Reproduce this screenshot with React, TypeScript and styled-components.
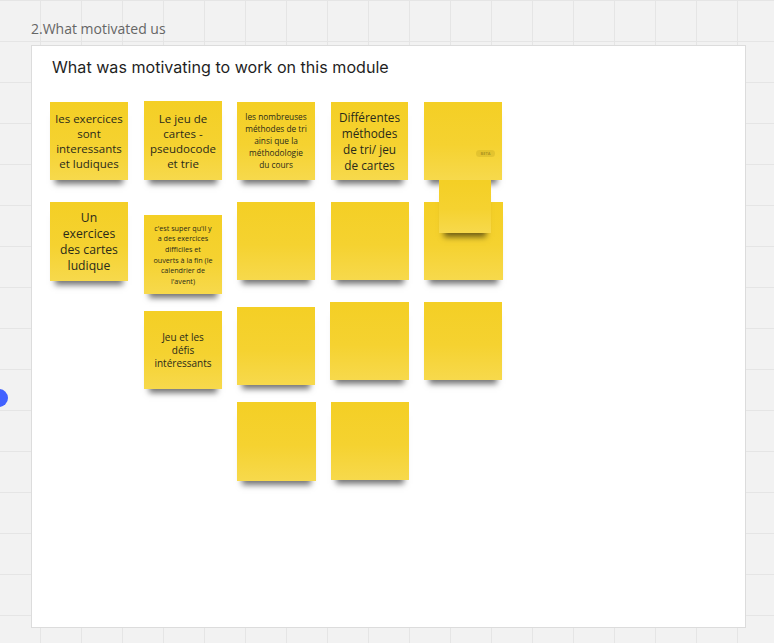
import React from "react"
import styled, { createGlobalStyle } from "styled-components"

const GlobalStyle = createGlobalStyle`
  html, body {
    margin: 0;
    padding: 0;
    background: #f2f2f2;
  }
  body {
    font-family: "Open Sans", "Liberation Sans", sans-serif;
  }
`

interface NoteData {
  left: number
  top: number
  w?: number
  h?: number
  text?: string[]
  size?: number
  line?: number
  tag?: boolean
}

// sticky notes sit on the frame's free canvas, so their place is the content
const notes: NoteData[] = [
  {
    left: 18,
    top: 56,
    text: ["les exercices", "sont", "interessants", "et ludiques"],
    size: 11.5,
    line: 15,
  },
  {
    left: 112,
    top: 55,
    h: 79,
    text: ["Le jeu de", "cartes -", "pseudocode", "et trie"],
    size: 11.5,
    line: 15,
  },
  {
    left: 205,
    top: 56,
    text: [
      "les nombreuses",
      "méthodes de tri",
      "ainsi que la",
      "méthodologie",
      "du cours",
    ],
    size: 8.3,
    line: 12,
  },
  {
    left: 299,
    top: 56,
    w: 77,
    text: ["Différentes", "méthodes", "de tri/ jeu", "de cartes"],
    size: 11.8,
    line: 16,
  },
  { left: 392, top: 56, tag: true },
  {
    left: 18,
    top: 156,
    h: 79,
    text: ["Un", "exercices", "des cartes", "ludique"],
    size: 12.2,
    line: 16,
  },
  {
    left: 112,
    top: 169,
    h: 79,
    text: [
      "c'est super qu'il y",
      "a des exercices",
      "difficiles et",
      "ouverts à la fin (le",
      "calendrier de",
      "l'avent)",
    ],
    size: 7.2,
    line: 10.6,
  },
  { left: 205, top: 156 },
  { left: 299, top: 156 },
  { left: 392, top: 156, w: 79 },
  {
    left: 112,
    top: 265,
    text: ["Jeu et les", "défis", "intéressants"],
    size: 10,
    line: 13,
  },
  { left: 205, top: 261 },
  { left: 298, top: 256, w: 79 },
  { left: 392, top: 256 },
  { left: 205, top: 356, w: 79, h: 79 },
  { left: 299, top: 356 },
  // small note stacked over the last column
  { left: 407, top: 134, w: 52, h: 53 },
]

export default function App() {
  return (
    <>
      <GlobalStyle />
      <Canvas>
        <FrameLabel>2.What motivated us</FrameLabel>
        <Frame>
          <FrameTitle>What was motivating to work on this module</FrameTitle>
          {notes.map((n, i) => (
            <Sticky
              key={i}
              style={{
                left: n.left,
                top: n.top,
                width: n.w ?? 78,
                height: n.h ?? 78,
              }}
            >
              {n.text && (
                <NoteText $size={n.size ?? 11} $line={n.line ?? 15}>
                  {n.text.map((t, j) => (
                    <span key={j}>{t}</span>
                  ))}
                </NoteText>
              )}
              {n.tag && <Tag>BETA</Tag>}
            </Sticky>
          ))}
        </Frame>
        <Cursor />
      </Canvas>
    </>
  )
}

const Canvas = styled.div`
  position: relative;
  width: 774px;
  height: 643px;
  overflow: hidden;
  box-sizing: border-box;
  padding: 19px 0 0 31px;
  background-color: #f2f2f2;
  background-image: linear-gradient(to right, #e5e5e5 1px, transparent 1px),
    linear-gradient(to bottom, #e5e5e5 1px, transparent 1px);
  background-size: 41px 41px;
  background-position: 40px 0, 0 0;
`

const FrameLabel = styled.div`
  height: 20px;
  margin-bottom: 6px;
  font-size: 14px;
  line-height: 20px;
  color: #666;
`

const Frame = styled.div`
  position: relative;
  width: 715px;
  height: 583px;
  box-sizing: border-box;
  background: #fff;
  border: 1px solid #dcdcdc;
`

const FrameTitle = styled.h1`
  margin: 0;
  padding: 10px 0 0 20px;
  font-family: Inter, "Open Sans", sans-serif;
  font-weight: 400;
  font-size: 16.1px;
  line-height: 22px;
  color: #1f1f1f;
`

const Sticky = styled.div`
  position: absolute;
  display: flex;
  align-items: center;
  justify-content: center;
  box-sizing: border-box;
  padding: 4px;
  background: linear-gradient(to bottom, #f4cf25 0%, #f5d230 55%, #f7d94c 100%);
  box-shadow: 0 9px 6px -5px rgba(0, 0, 0, 0.55);
`

const NoteText = styled.div<{ $size: number; $line: number }>`
  display: flex;
  flex-direction: column;
  align-items: center;
  text-align: center;
  white-space: nowrap;
  font-size: ${p => p.$size}px;
  line-height: ${p => p.$line}px;
  color: #2a2a1a;
`

const Tag = styled.div`
  position: absolute;
  left: 52px;
  top: 48px;
  width: 19px;
  height: 7px;
  border-radius: 4px;
  background: rgba(120, 100, 0, 0.14);
  font-size: 4px;
  line-height: 7px;
  font-weight: 700;
  text-align: center;
  color: rgba(60, 50, 0, 0.35);
`

const Cursor = styled.div`
  position: absolute;
  left: -10px;
  top: 389px;
  width: 18px;
  height: 18px;
  border-radius: 50%;
  background: #4262ff;
`
